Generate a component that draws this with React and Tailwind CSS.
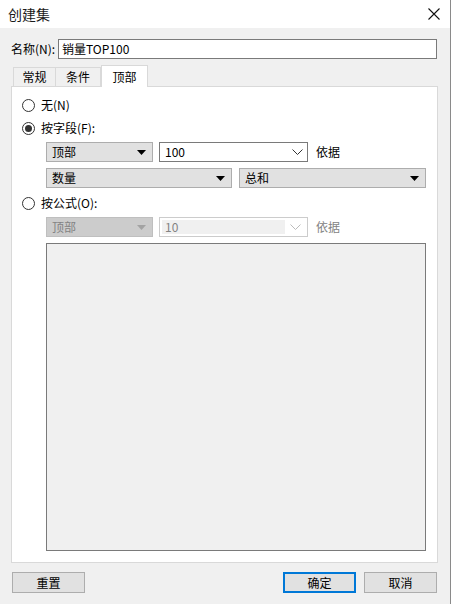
import React from "react";

const font = { fontFamily: '"Noto Sans CJK SC", "Liberation Sans", sans-serif' };

const Radio = ({ checked, label }) => (
  <div className="flex items-center h-[20px]">
    <span className="w-[13px] h-[13px] rounded-full border border-[#333] bg-white flex items-center justify-center">
      {checked && <span className="w-[7px] h-[7px] rounded-full bg-[#333]" />}
    </span>
    <span className="ml-[6px]">{label}</span>
  </div>
);

const Tri = ({ color = "#000" }) => (
  <svg width="9" height="5" viewBox="0 0 9 5">
    <path d="M0 0H9L4.5 5Z" fill={color} />
  </svg>
);

const Chevron = ({ color = "#333" }) => (
  <svg width="11" height="6" viewBox="0 0 11 6">
    <path d="M0.5 0.5L5.5 5.5L10.5 0.5" fill="none" stroke={color} strokeWidth="1" />
  </svg>
);

const Select = ({ text, width, disabled }) => (
  <div
    className={`h-[20px] flex items-center justify-between pl-[5px] pr-[6px] border ${
      disabled ? "bg-[#cccccc] border-[#bfbfbf] text-[#838383]" : "bg-[#e1e1e1] border-[#adadad] text-black"
    } ${width}`}
  >
    <span>{text}</span>
    <Tri color={disabled ? "#a3a3a3" : "#000"} />
  </div>
);

const Combo = ({ text, disabled }) => (
  <div
    className={`w-[149px] h-[20px] flex items-center border ${
      disabled ? "border-[#cccccc] bg-white text-[#838383] p-[2px]" : "border-[#7a7a7a] bg-white text-black"
    }`}
  >
    <div className={`flex-1 h-full flex items-center ${disabled ? "bg-[#f0f0f0] pl-[3px]" : "pl-[5px]"}`}>{text}</div>
    <div className="w-[20px] flex justify-center">
      <Chevron color={disabled ? "#bbb" : "#333"} />
    </div>
  </div>
);

const Button = ({ children, primary }) => (
  <div
    className={`w-[73px] h-[21px] flex items-center justify-center bg-[#e1e1e1] ${
      primary ? "border-2 border-[#0078d7]" : "border border-[#adadad]"
    }`}
  >
    {children}
  </div>
);

export default function App() {
  return (
    <div className="w-[451px] h-[604px] flex flex-col bg-[#f0f0f0] text-[12px] text-black border-r border-[#8a8a8a] overflow-hidden" style={font}>
      {/* title bar */}
      <div className="h-[28px] bg-white flex items-center justify-between pl-[8px] pr-[10px] shrink-0">
        <span className="text-[14px] text-[#1a1a1a]">创建集</span>
        <svg width="12" height="12" viewBox="0 0 12 12">
          <path d="M0.5 0.5L11.5 11.5M11.5 0.5L0.5 11.5" stroke="#111" strokeWidth="1.1" />
        </svg>
      </div>

      <div className="flex-1 flex flex-col pl-[11px] pr-[13px] pt-[11px]">
        {/* name */}
        <div className="flex items-center h-[20px]">
          <span className="w-[47px]">名称(N):</span>
          <div className="flex-1 h-[20px] border border-[#7a7a7a] bg-white flex items-center pl-[3px]">销量TOP100</div>
        </div>

        {/* tabs */}
        <div className="flex items-end h-[21px] mt-[6px] ml-[2px]">
          <div className="w-[43px] h-[19px] border border-b-0 border-[#d9d9d9] bg-[#f0f0f0] flex items-center justify-center">常规</div>
          <div className="w-[45px] h-[19px] border border-b-0 border-l-0 border-[#d9d9d9] bg-[#f0f0f0] flex items-center justify-center">条件</div>
          <div className="w-[47px] h-[22px] border border-b-0 border-[#d9d9d9] bg-white flex items-center justify-center -mb-px relative z-10">顶部</div>
        </div>

        {/* panel */}
        <div className="w-[427px] h-[477px] border border-[#d9d9d9] bg-white flex flex-col pl-[10px] pr-[10px] pt-[8px]">
          <Radio label="无(N)" />
          <div className="mt-[3px]">
            <Radio checked label="按字段(F):" />
          </div>
          <div className="ml-[24px] mt-[4px] flex items-center">
            <Select text="顶部" width="w-[107px]" />
            <div className="ml-[6px]">
              <Combo text="100" />
            </div>
            <span className="ml-[8px]">依据</span>
          </div>
          <div className="ml-[24px] mt-[6px] flex items-center gap-[7px]">
            <Select text="数量" width="w-[186px]" />
            <Select text="总和" width="w-[187px]" />
          </div>
          <div className="mt-[5px]">
            <Radio label="按公式(O):" />
          </div>
          <div className="ml-[24px] mt-[4px] flex items-center">
            <Select text="顶部" width="w-[107px]" disabled />
            <div className="ml-[6px]">
              <Combo text="10" disabled />
            </div>
            <span className="ml-[8px] text-[#838383]">依据</span>
          </div>
          <div className="ml-[24px] mt-[6px] w-[380px] h-[308px] border border-[#7a7a7a] bg-[#f0f0f0]" />
        </div>

        {/* buttons */}
        <div className="flex items-center mt-[9px] pl-[1px]">
          <Button>重置</Button>
          <div className="flex-1" />
          <Button primary>确定</Button>
          <div className="ml-[8px]">
            <Button>取消</Button>
          </div>
        </div>
      </div>
    </div>
  );
}
